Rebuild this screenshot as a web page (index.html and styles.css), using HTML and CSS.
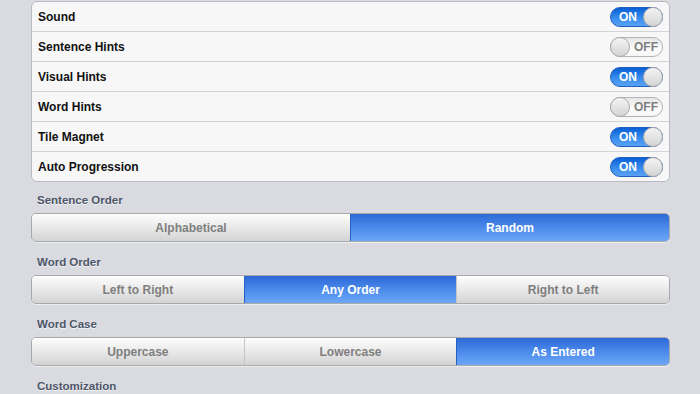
FILE: index.html
```html
<!DOCTYPE html>
<html lang="en">
<head>
    <meta charset="UTF-8">
    <meta name="viewport" content="width=device-width, initial-scale=1.0">
    <title>Settings</title>
    <link rel="stylesheet" href="styles.css">
</head>
<body>
    <main class="settings">
        <ul class="group">
            <li class="row"><span class="label">Sound</span><span class="switch on"><span class="text">ON</span><span class="knob"></span></span></li>
            <li class="row"><span class="label">Sentence Hints</span><span class="switch off"><span class="knob"></span><span class="text">OFF</span></span></li>
            <li class="row"><span class="label">Visual Hints</span><span class="switch on"><span class="text">ON</span><span class="knob"></span></span></li>
            <li class="row"><span class="label">Word Hints</span><span class="switch off"><span class="knob"></span><span class="text">OFF</span></span></li>
            <li class="row"><span class="label">Tile Magnet</span><span class="switch on"><span class="text">ON</span><span class="knob"></span></span></li>
            <li class="row"><span class="label">Auto Progression</span><span class="switch on"><span class="text">ON</span><span class="knob"></span></span></li>
        </ul>

        <h3 class="heading first">Sentence Order</h3>
        <div class="segmented">
            <span class="segment">Alphabetical</span>
            <span class="segment selected">Random</span>
        </div>

        <h3 class="heading">Word Order</h3>
        <div class="segmented">
            <span class="segment">Left to Right</span>
            <span class="segment selected">Any Order</span>
            <span class="segment">Right to Left</span>
        </div>

        <h3 class="heading">Word Case</h3>
        <div class="segmented">
            <span class="segment">Uppercase</span>
            <span class="segment">Lowercase</span>
            <span class="segment selected">As Entered</span>
        </div>

        <h3 class="heading">Customization</h3>
    </main>
</body>
</html>
```

FILE: styles.css
```css
body {
    margin: 0;
    padding: 0;
    font-family: 'Liberation Sans', Arial, sans-serif;
    background-color: #d9dbe0;
    overflow: hidden;
}

.settings {
    width: 639px;
    margin: 0 0 0 31px;
    padding-top: 1px;
}

.group {
    list-style: none;
    margin: 0;
    padding: 0;
    background-color: #f7f7f7;
    border: 1px solid #b7bac0;
    border-radius: 6px;
}

.row {
    display: flex;
    align-items: center;
    justify-content: space-between;
    height: 29px;
    padding: 0 6px 0 6px;
    border-bottom: 1px solid #d2d3d6;
}

.row:last-child {
    border-bottom: none;
}

.label {
    font-size: 12px;
    font-weight: bold;
    color: #111;
}

/* ios style switch */
.switch {
    display: flex;
    align-items: center;
    box-sizing: border-box;
    width: 53px;
    height: 20px;
    border-radius: 10px;
    font-size: 12px;
    font-weight: bold;
}

.switch .knob {
    box-sizing: border-box;
    width: 20px;
    height: 20px;
    border-radius: 50%;
    border: 1px solid #a9a9a9;
    background: linear-gradient(#f4f4f4, #d4d4d4);
    flex-shrink: 0;
}

.switch .text {
    flex: 1;
    text-align: center;
}

.switch.on {
    background: linear-gradient(#0a5fd6, #3b8ff0 60%, #5aa2f2);
    border: 1px solid #1f5fbf;
    color: #fff;
}

.switch.on .text {
    padding-left: 2px;
}

.switch.on .knob {
    margin-right: -1px;
}

.switch.off {
    background: linear-gradient(#e6e6e6, #fdfdfd 60%, #f5f5f5);
    border: 1px solid #b3b3b3;
    color: #7e7e7e;
}

.switch.off .knob {
    margin-left: -1px;
}

.heading {
    margin: 0;
    padding: 11px 0 6px 6px;
    line-height: 14px;
    font-size: 11.5px;
    font-weight: bold;
    color: #4d5568;
    text-shadow: 0 1px 0 #f2f3f5;
}

.heading + .segmented + .heading {
    padding-top: 13px;
}

.segmented {
    display: flex;
    height: 27px;
    border: 1px solid #a8a9ad;
    border-radius: 5px;
    overflow: hidden;
    box-shadow: 0 1px 0 #eeeff1;
}

.segment {
    flex: 1;
    display: flex;
    align-items: center;
    justify-content: center;
    font-size: 12px;
    font-weight: bold;
    color: #7f7f7f;
    background: linear-gradient(#fdfdfd, #e9e9e9 50%, #d3d3d3);
    border-left: 1px solid #c6c6c6;
}

.segment:first-child {
    border-left: none;
}

.segment.selected {
    color: #fff;
    background: linear-gradient(#2c68d6, #4b8aeb 50%, #6ba7f6);
    border-left-color: #2a5fc2;
}
```
